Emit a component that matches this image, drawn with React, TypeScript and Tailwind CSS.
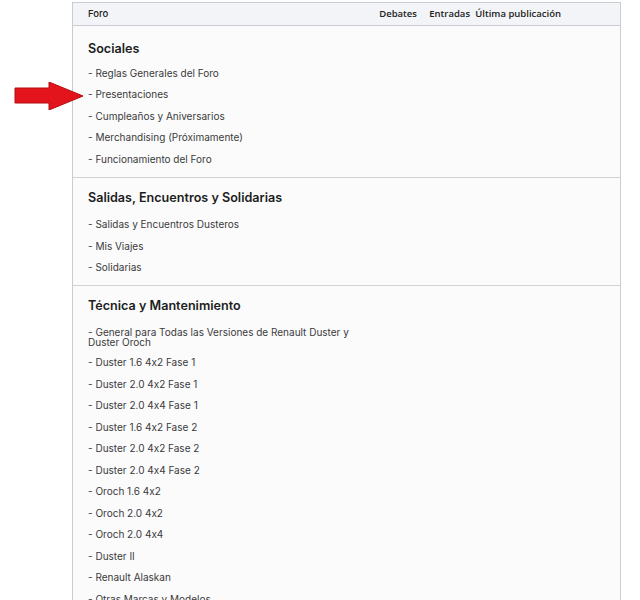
const sections = [
  {
    title: 'Sociales',
    items: [
      'Reglas Generales del Foro',
      'Presentaciones',
      'Cumpleaños y Aniversarios',
      'Merchandising (Próximamente)',
      'Funcionamiento del Foro',
    ],
  },
  {
    title: 'Salidas, Encuentros y Solidarias',
    items: ['Salidas y Encuentros Dusteros', 'Mis Viajes', 'Solidarias'],
  },
  {
    title: 'Técnica y Mantenimiento',
    items: [
      'General para Todas las Versiones de Renault Duster y|Duster Oroch',
      'Duster 1.6 4x2 Fase 1',
      'Duster 2.0 4x2 Fase 1',
      'Duster 2.0 4x4 Fase 1',
      'Duster 1.6 4x2 Fase 2',
      'Duster 2.0 4x2 Fase 2',
      'Duster 2.0 4x4 Fase 2',
      'Oroch 1.6 4x2',
      'Oroch 2.0 4x2',
      'Oroch 2.0 4x4',
      'Duster II',
      'Renault Alaskan',
      'Otras Marcas y Modelos',
    ],
  },
];

function Arrow() {
  return (
    <svg width="70" height="28" viewBox="0 0 70 28" className="absolute left-[14px] top-[82px]">
      <polygon points="1,6 35,6 35,0 69,14 35,28 35,21 1,21" fill="#e3141c" stroke="#b40d12" strokeWidth="1" />
    </svg>
  );
}

export default function App() {
  return (
    <div className="relative min-h-[600px] bg-white pl-[72px] pr-[19px] pt-[2px] font-['Inter',sans-serif] [font-variant-ligatures:no-contextual]">
      <div className="border border-[#c9ccd1] bg-[#fbfbfc]">
        {/* header */}
        <div className="flex items-center h-[23px] px-[15px] bg-[#f2f4f7] border-b border-[#c9ccd1] text-[9.5px] text-[#222]">
          <span className="font-medium">Foro</span>
          <div className="ml-auto flex font-['Open_Sans',sans-serif] font-semibold pr-[44px]">
            <span className="w-[50px]">Debates</span>
            <span className="w-[46px]">Entradas</span>
            <span>Última publicación</span>
          </div>
        </div>

        {sections.map((s, i) => (
          <div
            key={s.title}
            className={i > 0 ? 'px-[15px] pt-[11px] pb-[7px] border-t border-[#cfd2d6]' : 'px-[15px] pt-[14px] pb-[7px]'}
          >
            <h2 className={`text-[12.6px] leading-[18px] font-semibold text-[#1d1d1d] ${i > 0 ? 'mb-[7px]' : 'mb-[4px]'}`}>
              {s.title}
            </h2>
            <ul className="text-[10px] text-[#3a3a3a]">
              {s.items.map((it) =>
                it.includes('|') ? (
                  <li key={it} className="pt-[4.5px] pb-[4px] leading-[10.5px]">
                    - {it.split('|')[0]}
                    <br />
                    {it.split('|')[1]}
                  </li>
                ) : (
                  <li key={it} className="py-[5.5px] leading-[10.5px]">
                    - {it}
                  </li>
                )
              )}
            </ul>
          </div>
        ))}
      </div>
      <Arrow />
    </div>
  );
}
